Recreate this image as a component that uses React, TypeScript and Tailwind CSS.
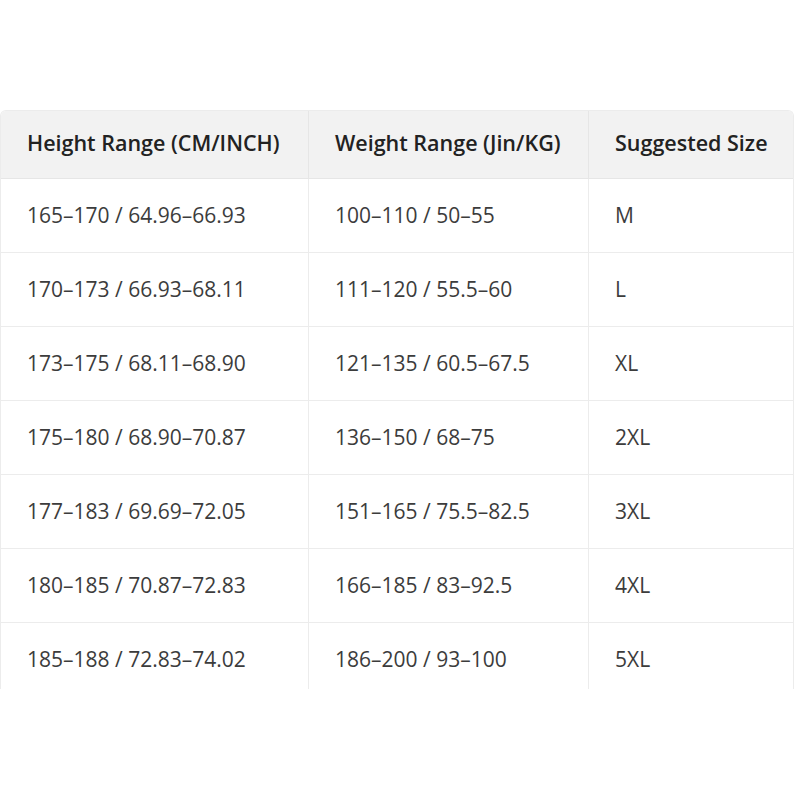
const HEADERS = ["Height Range (CM/INCH)", "Weight Range (Jin/KG)", "Suggested Size"];

const ROWS: [string, string, string][] = [
  ["165–170 / 64.96–66.93", "100–110 / 50–55", "M"],
  ["170–173 / 66.93–68.11", "111–120 / 55.5–60", "L"],
  ["173–175 / 68.11–68.90", "121–135 / 60.5–67.5", "XL"],
  ["175–180 / 68.90–70.87", "136–150 / 68–75", "2XL"],
  ["177–183 / 69.69–72.05", "151–165 / 75.5–82.5", "3XL"],
  ["180–185 / 70.87–72.83", "166–185 / 83–92.5", "4XL"],
  ["185–188 / 72.83–74.02", "186–200 / 93–100", "5XL"],
];

export default function App() {
  return (
    <div
      className="w-[800px] h-[800px] bg-white pt-[110px]"
      style={{ fontFamily: '"Open Sans", "Noto Sans", sans-serif' }}
    >
      <div className="w-[794px] h-[579px] overflow-hidden rounded-t-md border-l border-r border-t border-[#ececec]">
        <div className="grid grid-cols-[308px_280px_1fr] bg-[#f2f2f2] h-[68px] border-b border-[#e6e6e6]">
          {HEADERS.map((h, i) => (
            <div
              key={h}
              className={`flex items-center pl-[26px] pb-[3px] text-[21.5px] font-semibold text-[#222] ${i < 2 ? "border-r border-[#e6e6e6]" : ""}`}
            >
              {h}
            </div>
          ))}
        </div>
        {ROWS.map((row, r) => (
          <div
            key={r}
            className={`grid grid-cols-[308px_280px_1fr] h-[74px] ${r < ROWS.length - 1 ? "border-b border-[#ececec]" : ""}`}
          >
            {row.map((c, i) => (
              <div
                key={i}
                className={`flex items-center pl-[26px] text-[21px] text-[#3c3c3c] ${i < 2 ? "border-r border-[#ececec]" : ""}`}
              >
                {c}
              </div>
            ))}
          </div>
        ))}
      </div>
    </div>
  );
}
